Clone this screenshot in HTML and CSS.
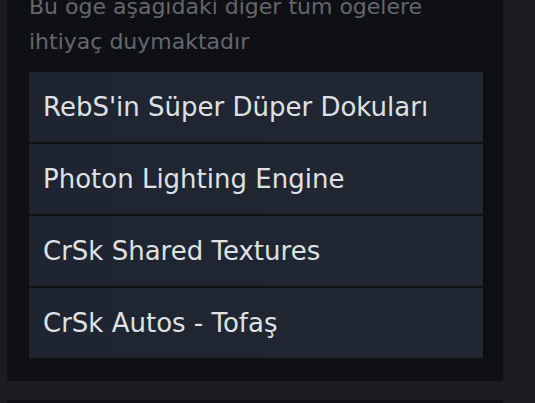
FILE: index.html
```html
<!DOCTYPE html>
<html lang="tr">
<head>
<meta charset="utf-8">
<link rel="stylesheet" href="styles.css">
</head>
<body>
<div class="page">
  <section class="panel">
    <p class="desc">Bu öğe aşağıdaki diğer tüm öğelere ihtiyaç duymaktadır</p>
    <ul class="deps">
      <li class="dep">RebS'in Süper Düper Dokuları</li>
      <li class="dep">Photon Lighting Engine</li>
      <li class="dep">CrSk Shared Textures</li>
      <li class="dep">CrSk Autos - Tofaş</li>
    </ul>
  </section>
  <div class="next"></div>
</div>
</body>
</html>
```
FILE: styles.css
```css
html, body {
  margin: 0;
  padding: 0;
  background: #1b1c20;
  height: 100%;
  overflow: hidden;
}
.page {
  display: flex;
  flex-direction: column;
  font-family: "DejaVu Sans", "Noto Sans", sans-serif;
}
.panel {
  margin-left: 7px;
  width: 496px;
  box-sizing: border-box;
  background: #0f1014;
  padding: 0 20px 23px 22px;
}
.desc {
  margin: -11px 0 0 0;
  width: 440px;
  font-size: 22px;
  line-height: 35px;
  color: #64676d;
}
.deps {
  list-style: none;
  margin: 13px 0 0 0;
  padding: 0;
  display: flex;
  flex-direction: column;
  gap: 2px;
}
.dep {
  height: 70px;
  display: flex;
  align-items: center;
  padding-left: 14px;
  background: linear-gradient(90deg, #1e2531, #212834);
  color: #dfe1e3;
  font-size: 26px;
}
.next {
  margin: 19px 0 0 7px;
  width: 496px;
  height: 4px;
  background: #0f1014;
}
```
